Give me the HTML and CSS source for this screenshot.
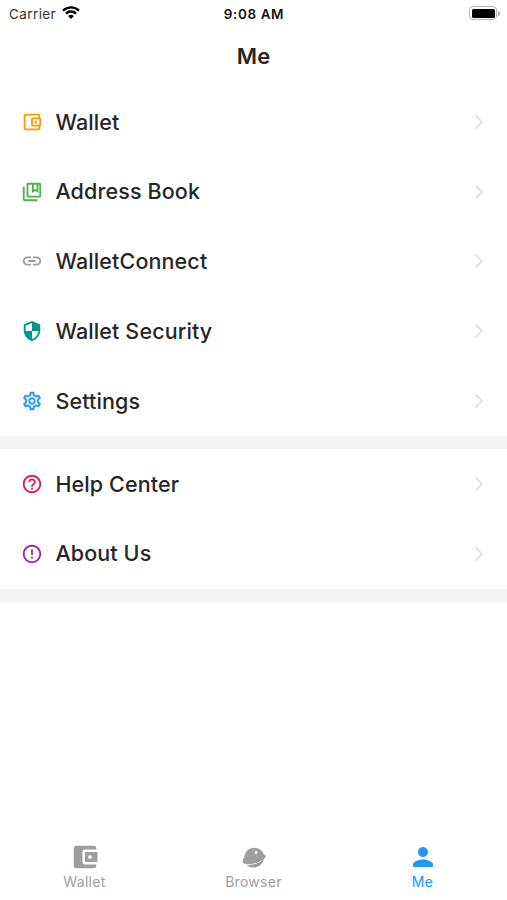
FILE: index.html
```html
<!DOCTYPE html>
<html lang="en">
<head>
    <meta charset="utf-8">
    <meta name="viewport" content="width=device-width, initial-scale=1">
    <title>Me</title>
    <link rel="stylesheet" href="styles.css">
</head>
<body>
<div class="status-bar">
    <div class="carrier">
        <span>Carrier</span>
        <svg class="wifi" viewBox="0 0 18 13">
            <path d="M1 4.6a11.5 11.5 0 0 1 16 0M3.9 7.6a7.3 7.3 0 0 1 10.2 0" fill="none" stroke="#000" stroke-width="2.3"/>
            <path d="M9 13L6.1 10.1a4.1 4.1 0 0 1 5.8 0z"/>
        </svg>
    </div>
    <div class="time">9:08 AM</div>
    <div class="battery">
        <div class="battery-body"></div>
        <div class="battery-cap"></div>
    </div>
</div>
<h1 class="title">Me</h1>

<ul class="menu">
    <li class="item">
        <svg class="icon orange" viewBox="0 0 24 24"><path d="M21 7.28V5c0-1.1-.9-2-2-2H5c-1.11 0-2 .9-2 2v14c0 1.1.89 2 2 2h14c1.1 0 2-.9 2-2v-2.28c.59-.35 1-.98 1-1.72V9c0-.74-.41-1.37-1-1.72zM20 9v6h-7V9h7zM5 19V5h14v2h-6c-1.1 0-2 .9-2 2v6c0 1.1.9 2 2 2h6v2H5z"/><circle cx="16" cy="12" r="1.5"/></svg>
        <span class="label">Wallet</span>
        <svg class="arrow" viewBox="0 0 10 16"><path d="M1.5 1.5L8 8l-6.5 6.5"/></svg>
    </li>
    <li class="item">
        <svg class="icon green" viewBox="0 0 24 24"><path d="M4 6H2v14c0 1.1.9 2 2 2h14v-2H4V6z"/><path fill-rule="evenodd" d="M20 2H8c-1.1 0-2 .9-2 2v12c0 1.1.9 2 2 2h12c1.1 0 2-.9 2-2V4c0-1.1-.9-2-2-2zM8 16V4h4v9l3.5-2.1L19 13V4h1v12H8zM14 4h3v5.5l-1.5-.9-1.5.9V4z"/></svg>
        <span class="label">Address Book</span>
        <svg class="arrow" viewBox="0 0 10 16"><path d="M1.5 1.5L8 8l-6.5 6.5"/></svg>
    </li>
    <li class="item">
        <svg class="icon grey" viewBox="0 0 24 24"><path d="M3.9 12c0-1.71 1.39-3.1 3.1-3.1h4V7H7c-2.76 0-5 2.24-5 5s2.24 5 5 5h4v-1.9H7c-1.71 0-3.1-1.39-3.1-3.1zM8 13h8v-2H8v2zm9-6h-4v1.9h4c1.71 0 3.1 1.39 3.1 3.1s-1.39 3.1-3.1 3.1h-4V17h4c2.76 0 5-2.24 5-5s-2.24-5-5-5z"/></svg>
        <span class="label">WalletConnect</span>
        <svg class="arrow" viewBox="0 0 10 16"><path d="M1.5 1.5L8 8l-6.5 6.5"/></svg>
    </li>
    <li class="item">
        <svg class="icon teal" viewBox="0 0 24 24"><path d="M12 1L3 5v6c0 5.55 3.84 10.74 9 12 5.16-1.26 9-6.45 9-12V5l-9-4zm0 10.99h7c-.53 4.12-3.28 7.79-7 8.94V12H5V6.3l7-3.11v8.8z"/></svg>
        <span class="label">Wallet Security</span>
        <svg class="arrow" viewBox="0 0 10 16"><path d="M1.5 1.5L8 8l-6.5 6.5"/></svg>
    </li>
    <li class="item">
        <svg class="icon blue" viewBox="0 0 24 24"><path d="M19.43 12.98c.04-.32.07-.64.07-.98 0-.34-.03-.66-.07-.98l2.11-1.65c.19-.15.24-.42.12-.64l-2-3.46c-.09-.16-.26-.25-.44-.25-.06 0-.12.01-.17.03l-2.49 1c-.52-.4-1.08-.73-1.69-.98l-.38-2.65C14.46 2.18 14.25 2 14 2h-4c-.25 0-.46.18-.49.42l-.38 2.65c-.61.25-1.17.59-1.69.98l-2.49-1c-.06-.02-.12-.03-.18-.03-.17 0-.34.09-.43.25l-2 3.46c-.13.22-.07.49.12.64l2.11 1.65c-.04.32-.07.65-.07.98 0 .33.03.66.07.98l-2.11 1.65c-.19.15-.24.42-.12.64l2 3.46c.09.16.26.25.44.25.06 0 .12-.01.17-.03l2.49-1c.52.4 1.08.73 1.69.98l.38 2.65c.03.24.24.42.49.42h4c.25 0 .46-.18.49-.42l.38-2.65c.61-.25 1.17-.59 1.69-.98l2.49 1c.06.02.12.03.18.03.17 0 .34-.09.43-.25l2-3.46c.12-.22.07-.49-.12-.64l-2.11-1.65zm-1.98-1.71c.04.31.05.52.05.73 0 .21-.02.43-.05.73l-.14 1.13.89.7 1.08.84-.7 1.21-1.27-.51-1.04-.42-.9.68c-.43.32-.84.56-1.25.73l-1.06.43-.16 1.13-.2 1.35h-1.4l-.19-1.35-.16-1.13-1.06-.43c-.43-.18-.83-.41-1.23-.71l-.91-.7-1.06.43-1.27.51-.7-1.21 1.08-.84.89-.7-.14-1.13c-.03-.31-.05-.54-.05-.74s.02-.43.05-.73l.14-1.13-.89-.7-1.08-.84.7-1.21 1.27.51 1.04.42.9-.68c.43-.32.84-.56 1.25-.73l1.06-.43.16-1.13.2-1.35h1.39l.19 1.35.16 1.13 1.06.43c.43.18.83.41 1.23.71l.91.7 1.06-.43 1.27-.51.7 1.21-1.07.85-.89.7.14 1.13zM12 8c-2.21 0-4 1.79-4 4s1.79 4 4 4 4-1.79 4-4-1.79-4-4-4zm0 6c-1.1 0-2-.9-2-2s.9-2 2-2 2 .9 2 2-.9 2-2 2z"/></svg>
        <span class="label">Settings</span>
        <svg class="arrow" viewBox="0 0 10 16"><path d="M1.5 1.5L8 8l-6.5 6.5"/></svg>
    </li>
</ul>
<ul class="menu">
    <li class="item">
        <svg class="icon pink" viewBox="0 0 24 24"><path d="M11 18h2v-2h-2v2zm1-16C6.48 2 2 6.48 2 12s4.48 10 10 10 10-4.48 10-10S17.52 2 12 2zm0 18c-4.41 0-8-3.59-8-8s3.59-8 8-8 8 3.59 8 8-3.59 8-8 8zm0-14c-2.21 0-4 1.79-4 4h2c0-1.1.9-2 2-2s2 .9 2 2c0 2-3 1.75-3 5h2c0-2.25 3-2.5 3-5 0-2.21-1.79-4-4-4z"/></svg>
        <span class="label">Help Center</span>
        <svg class="arrow" viewBox="0 0 10 16"><path d="M1.5 1.5L8 8l-6.5 6.5"/></svg>
    </li>
    <li class="item">
        <svg class="icon purple" viewBox="0 0 24 24"><path d="M11 15h2v2h-2v-2zm0-8h2v6h-2V7zm.99-5C6.47 2 2 6.48 2 12s4.47 10 9.99 10C17.52 22 22 17.52 22 12S17.52 2 11.99 2zM12 20c-4.42 0-8-3.58-8-8s3.58-8 8-8 8 3.58 8 8-3.58 8-8 8z"/></svg>
        <span class="label">About Us</span>
        <svg class="arrow" viewBox="0 0 10 16"><path d="M1.5 1.5L8 8l-6.5 6.5"/></svg>
    </li>
</ul>

<nav class="tabs">
    <div class="tab">
        <svg viewBox="0 0 24 24"><path d="M21 18v1c0 1.1-.9 2-2 2H5c-1.11 0-2-.9-2-2V5c0-1.1.89-2 2-2h14c1.1 0 2 .9 2 2v1h-9c-1.11 0-2 .9-2 2v8c0 1.1.89 2 2 2h9zm-9-2h10V8H12v8zm4-2.5c-.83 0-1.5-.67-1.5-1.5s.67-1.5 1.5-1.5 1.5.67 1.5 1.5-.67 1.5-1.5 1.5z"/></svg>
        <span>Wallet</span>
    </div>
    <div class="tab">
        <svg viewBox="0 0 30 30">
            <path d="M5.3 15.2C5.6 9.800 9.800 5.800 15.200 5.800c4.700 0 8.500 2.900 9.700 6.900 1.500.1 2.200.8 1.800 2-.8 2.500-5 4.800-9.700 6.200-6 1.700-12 1.800-13.100-.4-.6-1.300 0-3.400 1.400-5.300z"/>
            <path d="M7.500 23.200c6.500.2 13.500-2.400 17.300-5.600-1.300 4.800-5 7.900-9.600 7.900-3 0-5.700-.8-7.700-2.300z"/>
            <circle cx="17" cy="10.700" r="1.400" fill="#fff"/>
        </svg>
        <span>Browser</span>
    </div>
    <div class="tab active">
        <svg viewBox="0 0 24 24"><path d="M12 12c2.21 0 4-1.79 4-4s-1.79-4-4-4-4 1.79-4 4 1.79 4 4 4zm0 2c-2.67 0-8 1.34-8 4v2h16v-2c0-2.66-5.33-4-8-4z"/></svg>
        <span>Me</span>
    </div>
</nav>
</body>
</html>
```
FILE: styles.css
```css
* { box-sizing: border-box; }
body { margin: 0; height: 900px; display: flex; flex-direction: column; background: #fff; color: #262626; font-family: Inter, sans-serif; overflow: hidden; }

/* status bar */
.status-bar { display: grid; grid-template-columns: 1fr auto 1fr; align-items: center; height: 27px; padding: 0 7px 0 9px; font-size: 13.5px; color: #333; }
.carrier { display: flex; align-items: center; gap: 6px; letter-spacing: .4px; }
.wifi { width: 18px; height: 13px; margin-top: -2px; }
.time { font-weight: 600; color: #111; letter-spacing: .6px; margin-right: 1px; }
.battery { display: flex; align-items: center; justify-content: flex-end; gap: 1px; margin-top: -1px; }
.battery-body { width: 28px; height: 14px; border: 1.5px solid #b5b5b5; border-radius: 4px; padding: 1.5px; background: #000 content-box; }
.battery-cap { width: 2px; height: 5px; border-radius: 0 2px 2px 0; background: #b5b5b5; }

.title { margin: 0; height: 60px; line-height: 59px; text-align: center; font-size: 22px; font-weight: 600; letter-spacing: .2px; }

/* menu */
.menu { list-style: none; margin: 0; padding: 0; border-bottom: 13px solid #f5f5f5; }
.item { display: flex; align-items: center; height: 69.8px; padding: 0 23px 0 21.4px; }
.icon { width: 22px; height: 22px; fill: currentColor; }
.label { flex: 1; margin: -.5px 0 0 12px; font-size: 21.5px; font-weight: 500; letter-spacing: .12px; }
.arrow { width: 10px; height: 16px; fill: none; stroke: #ddd; stroke-width: 1.6; }
.orange { color: #ff9800; }
.green { color: #4caf50; }
.grey { color: #9e9e9e; }
.teal { color: #009688; }
.blue { color: #2196f3; }
.pink { color: #d81b60; }
.purple { color: #9c27b0; }

/* bottom tabs */
.tabs { display: flex; margin-top: auto; height: 58px; }
.tab { flex: 1; display: flex; flex-direction: column; align-items: center; color: #9e9e9e; font-size: 14px; line-height: 20px; letter-spacing: .3px; }
.tab svg { width: 30px; height: 30px; fill: currentColor; }
.tab.active { color: #2196f3; }
```
